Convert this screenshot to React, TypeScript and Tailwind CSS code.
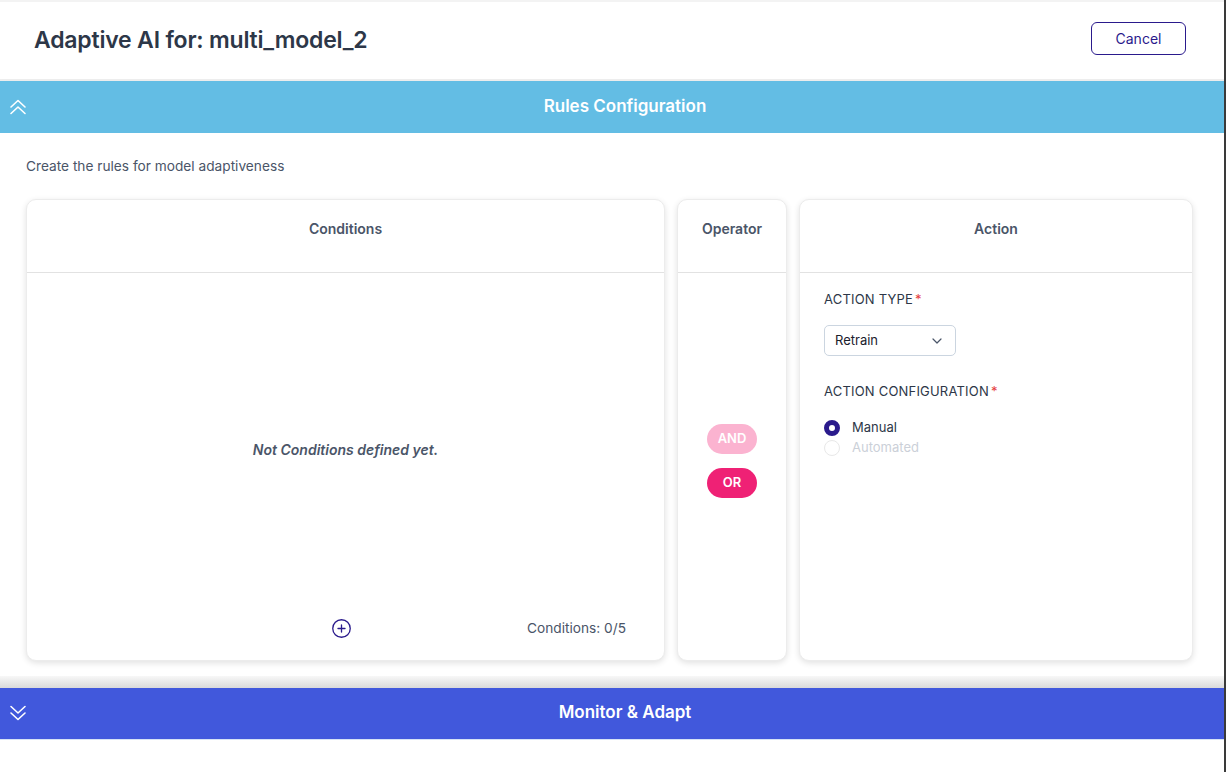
import { ChevronDown, CirclePlus } from "lucide-react";

// thin double chevron used on the collapsible section bars
const DoubleChevron = ({ up }: { up?: boolean }) => (
  <svg
    width="18"
    height="16"
    viewBox="0 0 18 16"
    fill="none"
    stroke="white"
    strokeWidth="1.6"
    strokeLinecap="round"
    strokeLinejoin="round"
    className={`absolute left-[9px] ${up ? "" : "rotate-180"}`}
  >
    <path d="M2 8 L9 1.5 L16 8" />
    <path d="M2 14.5 L9 8 L16 14.5" />
  </svg>
);

const Card = ({ title, className, children }: { title: string; className?: string; children: React.ReactNode }) => (
  <div className={`flex flex-col bg-white rounded-[10px] border border-[#ececec] shadow-[0_2px_6px_rgba(0,0,0,0.12)] ${className ?? ""}`}>
    <div className="h-[73px] shrink-0 flex justify-center pt-[19px] border-b border-[#e2e2e2] text-sm font-semibold text-[#4a5568]">
      {title}
    </div>
    {children}
  </div>
);

export default function App() {
  return (
    <div className="flex w-[1226px] h-[772px] bg-white font-['Inter',sans-serif] overflow-hidden">
      <div className="flex-1 flex flex-col">
        {/* page header */}
        <header className="h-[81px] shrink-0 flex items-center justify-between pl-[34px] pr-[38px] border-t-2 border-[#f3f3f3] border-b-2 border-b-[#eeeeee]">
          <h1 className="text-[23px] font-semibold text-[#2d3748] tracking-[-0.2px]">Adaptive AI for: multi_model_2</h1>
          <button className="w-[95px] h-[33px] mb-[4px] rounded-md border border-[#2a1a8c] text-sm text-[#2a1a8c]">Cancel</button>
        </header>

        {/* rules section */}
        <section className="flex flex-col shadow-[0_4px_8px_rgba(0,0,0,0.06)]">
          <div className="relative h-[52px] flex items-center justify-center pl-[26px] bg-[#63bde4] text-white">
            <DoubleChevron up />
            <span className="text-[17px] font-semibold">Rules Configuration</span>
          </div>
          <div className="px-[26px] pt-[23px] pb-[15px]">
            <p className="text-[13.7px] text-[#4a5568]">Create the rules for model adaptiveness</p>
            <div className="flex gap-3 mt-[22px] h-[462px]">
              <Card title="Conditions" className="w-[639px]">
                <div className="flex-1 flex items-center justify-center">
                  <span className="text-sm italic font-semibold text-[#4a5568] mt-[28px]">Not Conditions defined yet.</span>
                </div>
                <div className="h-[60px] flex items-center pb-[3px]">
                  <CirclePlus className="ml-[304px] w-[21px] h-[21px] text-[#2a1a8c]" strokeWidth={1.5} />
                  <span className="ml-[175px] text-[13.7px] text-[#4a5568]">Conditions: 0/5</span>
                </div>
              </Card>
              <Card title="Operator" className="w-[110px]">
                <div className="flex-1 flex flex-col items-center justify-center gap-[14px] pb-[10px]">
                  <span className="w-[50px] h-[30px] rounded-full bg-[#fbb3d0] text-white text-[13px] font-semibold flex items-center justify-center">AND</span>
                  <span className="w-[50px] h-[30px] rounded-full bg-[#ef2175] text-white text-[13px] font-semibold flex items-center justify-center">OR</span>
                </div>
              </Card>
              <Card title="Action" className="w-[394px]">
                <div className="flex-1 px-6 pt-[17px]">
                  <div className="text-[13px] text-[#2d3748] tracking-[0.2px]">
                    ACTION TYPE<span className="text-[#e53e3e] ml-[2px]">*</span>
                  </div>
                  <div className="mt-[16px] w-[132px] h-[31px] rounded-[5px] border border-[#cbd5e0] flex items-center justify-between px-[10px]">
                    <span className="text-[13px] text-[#1a202c]">Retrain</span>
                    <ChevronDown className="w-4 h-4 text-[#4a5568]" strokeWidth={1.8} />
                  </div>
                  <div className="mt-[26px] text-[13px] text-[#2d3748] tracking-[0.2px]">
                    ACTION CONFIGURATION<span className="text-[#e53e3e] ml-[2px]">*</span>
                  </div>
                  <div className="mt-[18px] flex flex-col gap-[4px]">
                    <label className="flex items-center gap-3 h-4">
                      <span className="w-4 h-4 rounded-full border-[5px] border-[#2a1a8c] bg-white" />
                      <span className="text-[13px] text-[#2d3748]">Manual</span>
                    </label>
                    <label className="flex items-center gap-3 h-4">
                      <span className="w-4 h-4 rounded-full border border-[#e8e8e8] bg-white" />
                      <span className="text-[13px] text-[#cbd0d8]">Automated</span>
                    </label>
                  </div>
                </div>
              </Card>
            </div>
          </div>
        </section>

        <div className="h-3 shrink-0 bg-gradient-to-b from-[#f8f8f8] to-[#dadada]" />

        {/* monitor section */}
        <div className="relative h-[52px] shrink-0 flex items-center justify-center pl-[26px] bg-[#4158dc] text-white border-b border-[#d6e2f5]">
          <DoubleChevron />
          <span className="text-[17px] font-semibold">Monitor &amp; Adapt</span>
        </div>
        <div className="flex-1 bg-white" />
      </div>
      <div className="w-[2px] bg-[#3a3a3a]" />
    </div>
  );
}
